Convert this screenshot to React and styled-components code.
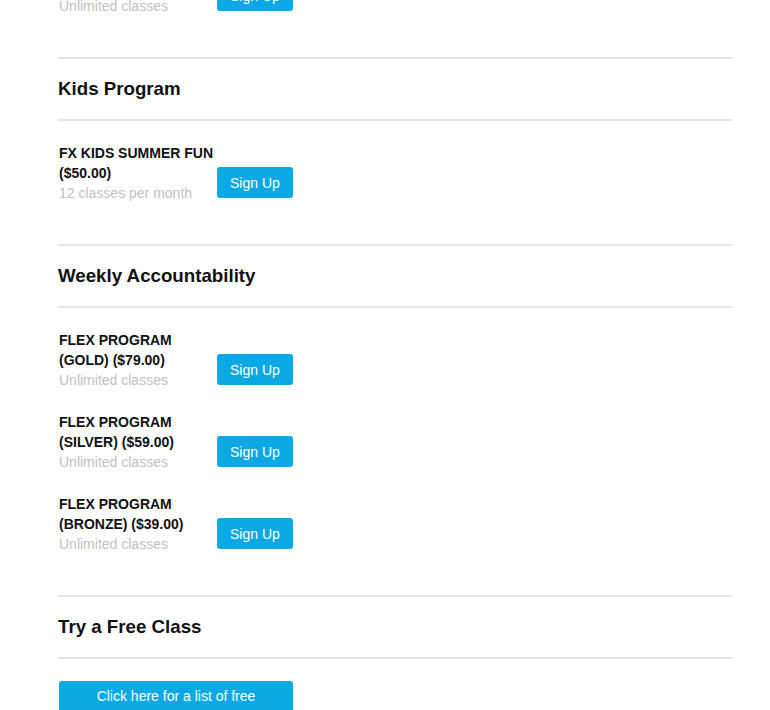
import React from 'react'
import styled, { createGlobalStyle } from 'styled-components'

const GlobalStyle = createGlobalStyle`
  html, body {
    margin: 0;
    padding: 0;
    background: #fff;
    font-family: "Liberation Sans", Arial, sans-serif;
    overflow: hidden;
  }
`;

const Page = styled.div`
  padding: 0 38px 0 58px;
  margin-top: -44px;
`;

const Section = styled.section`
  display: flex;
  flex-direction: column;
`;

const Divider = styled.div`
  height: 2px;
  background: #e6e6e6;
`;

const Heading = styled.h3`
  margin: 0;
  padding: 20px 0;
  font-size: 18.72px;
  line-height: 20px;
  font-weight: bold;
  color: #111;
`;

const ItemList = styled.div`
  display: flex;
  flex-direction: column;
  gap: 22px;
  padding: ${p => (p.$first ? '0 0 41px' : '22px 0 41px')};
`;

const Item = styled.div`
  display: flex;
  align-items: flex-start;
`;

const Info = styled.div`
  width: 158px;
  padding-left: 1px;
  font-size: 14px;
  line-height: 20px;
`;

const Name = styled.div`
  font-weight: bold;
  color: #111;
`;

const Desc = styled.div`
  color: #c2c2c2;
`;

const SignUp = styled.button`
  margin-top: 24px;
  height: 31px;
  padding: 0 13px;
  border: none;
  border-radius: 3px;
  background: #0aa9e6;
  color: #fff;
  font-family: inherit;
  font-size: 14px;
  line-height: 20px;
  cursor: pointer;
`;

const FreeButton = styled.button`
  margin: 22px 0 0 1px;
  width: 234px;
  padding: 5px 22px;
  border: none;
  border-radius: 3px;
  background: #0aa9e6;
  color: #fff;
  font-family: inherit;
  font-size: 14px;
  line-height: 20px;
  text-align: center;
  cursor: pointer;
`;

const sections = [
  {
    title: 'Kids Program',
    items: [
      { name: 'FX KIDS SUMMER FUN ($50.00)', desc: '12 classes per month' },
    ],
  },
  {
    title: 'Weekly Accountability',
    items: [
      { name: 'FLEX PROGRAM (GOLD) ($79.00)', desc: 'Unlimited classes' },
      { name: 'FLEX PROGRAM (SILVER) ($59.00)', desc: 'Unlimited classes' },
      { name: 'FLEX PROGRAM (BRONZE) ($39.00)', desc: 'Unlimited classes' },
    ],
  },
];

function PlanRow({ name, desc }) {
  return (
    <Item>
      <Info>
        <Name>{name}</Name>
        <Desc>{desc}</Desc>
      </Info>
      <SignUp>Sign Up</SignUp>
    </Item>
  );
}

export default function App() {
  return (
    <>
      <GlobalStyle />
      <Page>
        <ItemList $first>
          <PlanRow name="FLEX PROGRAM (PLATINUM) ($99.00)" desc="Unlimited classes" />
        </ItemList>
        {sections.map(s => (
          <Section key={s.title}>
            <Divider />
            <Heading>{s.title}</Heading>
            <Divider />
            <ItemList>
              {s.items.map(it => (
                <PlanRow key={it.name} {...it} />
              ))}
            </ItemList>
          </Section>
        ))}
        <Section>
          <Divider />
          <Heading>Try a Free Class</Heading>
          <Divider />
          <div>
            <FreeButton>Click here for a list of free classes</FreeButton>
          </div>
        </Section>
      </Page>
    </>
  );
}
